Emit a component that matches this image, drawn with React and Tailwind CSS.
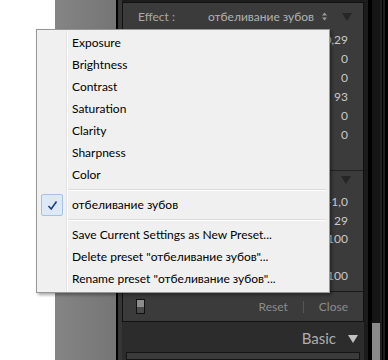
import React from 'react';

const menuFont = { fontFamily: 'Lato, "Liberation Sans", sans-serif' };

const effects = ['Exposure', 'Brightness', 'Contrast', 'Saturation', 'Clarity', 'Sharpness', 'Color'];
const topValues = ['0,29', '0', '0', '93', '0', '0'];

const MenuItem = ({ label, checked }) => (
    <div className="relative h-[22px] flex items-center pl-[34px] text-[12px] text-black">
        {checked && (
            <div className="absolute left-[3px] top-0 w-[22px] h-[22px] rounded-[2px] border border-[#a7c1e2] bg-[#dde9f7] flex items-center justify-center">
                <svg width="11" height="11" viewBox="0 0 11 11">
                    <path d="M1.5 6 L4.2 9 L9.5 1.5" fill="none" stroke="#1b3f84" strokeWidth="1.6" />
                </svg>
            </div>
        )}
        {label}
    </div>
);

const Separator = () => (
    <div className="h-[8px] flex flex-col justify-center pl-[30px] pr-[2px]">
        <div className="h-px bg-[#dcdcdc]" />
        <div className="h-px bg-white" />
    </div>
);

const Triangle = ({ color = '#262626' }) => (
    <svg width="10" height="8" viewBox="0 0 10 8">
        <path d="M0 0 L10 0 L5 8 Z" fill={color} />
    </svg>
);

const App = () => {
    return (
        <div className="relative w-[388px] h-[360px] overflow-hidden flex bg-white" style={{ fontFamily: 'Lato, "Noto Sans", sans-serif' }}>
            <div className="w-[55px] bg-white" />
            <div className="w-[61px] bg-gradient-to-r from-[#858585] to-[#757575]" />
            <div className="w-[2px] bg-black" />
            <div className="w-[4px] bg-[#363636]" />

            {/* right panel */}
            <div className="w-[242px] bg-[#2c2c2c] flex flex-col">
                <div className="h-[2px] bg-[#1c1c1c]" />
                <div className="flex flex-col border border-[#111] bg-[#3b3b3b] h-[320px]">
                    <div className="h-[27px] flex items-center pl-[15px] pr-[11px] text-[12px] text-[#a9a9a9]">
                        <span>Effect :</span>
                        <span className="ml-[33px] text-[#b2b2b2]">отбеливание зубов</span>
                        <svg className="ml-[8px]" width="5" height="9" viewBox="0 0 5 9">
                            <path d="M0 3.5 L2.5 0.5 L5 3.5 Z M0 5.5 L2.5 8.5 L5 5.5 Z" fill="#9a9a9a" />
                        </svg>
                        <span className="ml-auto flex"><Triangle /></span>
                    </div>
                    <div className="flex flex-col items-end pr-[15px] text-[12px] text-[#c9c9c9]">
                        {topValues.map((v, i) => (
                            <div key={i} className="h-[19px] flex items-center">{v}</div>
                        ))}
                    </div>
                    <div className="h-[26px]" />
                    <div className="h-px bg-[#232323]" />
                    <div className="h-[18px] flex items-center justify-end pr-[12px]"><Triangle /></div>
                    <div className="flex flex-col items-end pr-[15px] text-[12px] text-[#c9c9c9] pt-[3px]">
                        <div className="h-[19px] flex items-center">-1,0</div>
                        <div className="h-[19px] flex items-center">29</div>
                        <div className="h-[18px] flex items-center">100</div>
                        <div className="h-[18px]" />
                        <div className="h-[19px] flex items-center">100</div>
                    </div>
                    <div className="flex-1" />
                    <div className="h-px bg-[#1a1a1a]" />
                    <div className="h-[29px] flex items-center pl-[13px] pr-[15px] text-[12px] text-[#8c8c8c]">
                        <div className="w-[9px] h-[15px] border border-[#111] flex flex-col">
                            <div className="flex-1 bg-[#8d8d8d]" />
                            <div className="flex-1 bg-[#4a4a4a]" />
                        </div>
                        <span className="ml-auto">Reset</span>
                        <span className="mx-[15px] w-px h-[12px] bg-[#555]" />
                        <span>Close</span>
                    </div>
                </div>
                <div className="h-[27px] mt-[3px] flex items-center justify-end pr-[6px] gap-[12px]">
                    <span className="text-[15px] text-[#aeaeae]">Basic</span>
                    <Triangle color="#c2c2c2" />
                </div>
                <div className="flex-1 mx-[4px] border border-[#151515] bg-[#3b3b3b]" />
            </div>

            {/* right stripes */}
            <div className="flex-1 flex bg-black">
                <div className="w-[4px] bg-[#1b1b1b]" />
                <div className="w-[4px] bg-black" />
                <div className="w-[8px] flex flex-col">
                    <div className="h-[323px] bg-[#151515]" />
                    <div className="flex-1 bg-[#8a8a8a]" />
                </div>
                <div className="w-[2px] bg-[#202020]" />
                <div className="w-[1px] bg-black" />
                <div className="w-[2px] bg-[#1d1d1d]" />
                <div className="w-[1px] bg-black" />
            </div>

            {/* popup menu */}
            <div
                className="absolute left-[36px] top-[29px] w-[294px] h-[264px] bg-[#f0f0f0] border border-[#979797] shadow-[2px_2px_3px_rgba(0,0,0,0.35)] py-[2px] px-[1px]"
                style={menuFont}
            >
                <div className="absolute left-[29px] top-[1px] bottom-[1px] w-px bg-[#e2e2e2]" />
                <div className="absolute left-[30px] top-[1px] bottom-[1px] w-px bg-white" />
                {effects.map((e) => (
                    <MenuItem key={e} label={e} />
                ))}
                <Separator />
                <MenuItem label="отбеливание зубов" checked />
                <Separator />
                <MenuItem label="Save Current Settings as New Preset..." />
                <MenuItem label={'Delete preset "отбеливание зубов"...'} />
                <MenuItem label={'Rename preset "отбеливание зубов"...'} />
            </div>
        </div>
    );
};

export default App;
